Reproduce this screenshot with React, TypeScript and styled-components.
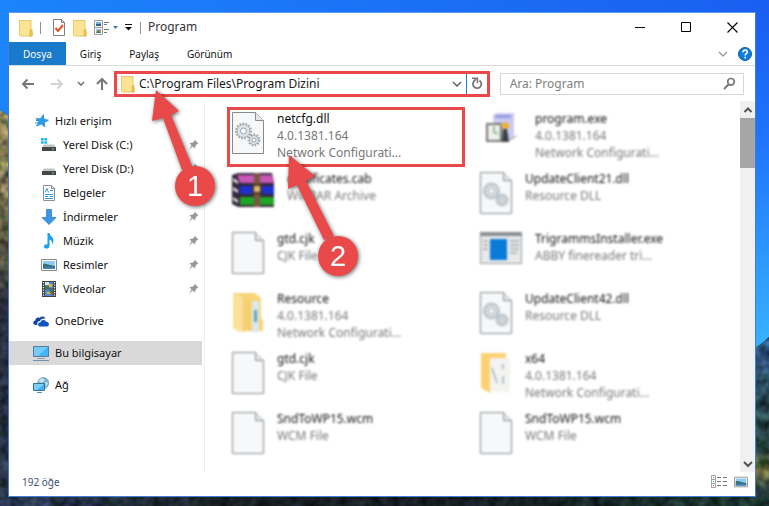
import React from "react";
import styled, { createGlobalStyle, css } from "styled-components";

const RED = "#e94a49";

const GlobalStyle = createGlobalStyle`
  * { box-sizing: border-box; }
  body { margin: 0; font-family: "Noto Sans", "Open Sans", sans-serif; font-size: 12px; color: #1a1a1a; }
  button, input { font: inherit; color: inherit; }
  ul { list-style: none; margin: 0; padding: 0; }
  svg { display: block; flex: none; }
`;

const Desktop = styled.div`
  position: relative;
  display: flex;
  min-height: 100vh;
  padding: 12px 13px 9px 8px;
  background: #1f7cf6;
`;

const WallpaperArt = styled.svg`
  position: absolute;
  inset: 0;
  width: 100%;
  height: 100%;
`;

const Window = styled.main`
  position: relative;
  flex: 1;
  min-width: 0;
  display: flex;
  flex-direction: column;
  background: #fff;
  border: 1px solid #3f7fd6;
  border-top-color: #5f9cf2;
`;

const TitleBar = styled.header`
  display: flex;
  align-items: center;
  height: 29px;
  padding-left: 10px;
`;

const QuickTools = styled.div`
  display: flex;
  align-items: center;
`;

const IconButton = styled.button<{ $w?: number; $h?: number }>`
  display: flex;
  align-items: center;
  justify-content: center;
  flex: none;
  width: ${(p) => p.$w ?? 20}px;
  height: ${(p) => p.$h ?? 20}px;
  padding: 0;
  border: 0;
  background: none;
`;

const Separator = styled.span<{ $left: number; $right: number }>`
  width: 1px;
  height: 12px;
  margin: 0 ${(p) => p.$right}px 0 ${(p) => p.$left}px;
  background: #8f8f8f;
`;

const Title = styled.h1`
  flex: 1;
  margin: 0;
  padding-bottom: 2px;
  font-size: 12px;
  font-weight: 400;
  color: #333;
`;

const Ribbon = styled.div`
  display: flex;
  align-items: stretch;
  height: 24px;
  border-bottom: 1px solid #d9dadc;
`;

const Tab = styled.button<{ $active?: boolean }>`
  padding: 0 14px;
  border: 0;
  font-size: 10px;
  background: ${(p) => (p.$active ? "#1979ca" : "none")};
  color: ${(p) => (p.$active ? "#fff" : "#111")};
`;

const RibbonEnd = styled.div`
  display: flex;
  align-items: center;
  gap: 5px;
  margin-left: auto;
  padding-right: 3px;
`;

const Toolbar = styled.div`
  display: flex;
  align-items: center;
  height: 35px;
  padding-right: 11px;
`;

const NavButtons = styled.div`
  display: flex;
  align-items: center;
  flex: none;
  width: 105px;
  padding-left: 10px;
`;

const AddressBar = styled.div`
  display: flex;
  align-items: center;
  flex: 365 1 0;
  min-width: 0;
  height: 26px;
  margin-right: 10px;
  padding-left: 4px;
  border: 3px solid ${RED};
`;

const TextField = styled.input`
  flex: 1;
  min-width: 0;
  padding: 0;
  border: 0;
  outline: 0;
  background: none;
  &::placeholder { color: #808080; opacity: 1; }
`;

const AddressField = styled(TextField)`
  margin-left: 4px;
`;

const RefreshButton = styled(IconButton)`
  border-left: 1px solid #1883e0;
`;

const SearchBar = styled.label`
  display: flex;
  align-items: center;
  flex: 226 1 0;
  min-width: 0;
  height: 22px;
  padding: 0 7px 0 9px;
  border: 1px solid #d6d6d6;
`;

const Body = styled.div`
  display: flex;
  flex: 1;
  min-height: 0;
`;

const Sidebar = styled.nav`
  display: flex;
  flex-direction: column;
  gap: 8px;
  flex: none;
  width: 196px;
  padding: 8px 2px 0 0;
  border-right: 1px solid #ededed;
`;

const Place = styled.a<{ $nested?: boolean; $selected?: boolean }>`
  display: flex;
  align-items: center;
  gap: 6px;
  height: 24px;
  padding: 0 3px 0 ${(p) => (p.$nested ? 32 : 24)}px;
  background: ${(p) => (p.$selected ? "#d9d9d9" : "none")};
  color: #111;
  font-size: 11px;
  text-decoration: none;
  white-space: nowrap;
`;

const PlaceName = styled.span`
  flex: 1;
  padding-bottom: 2px;
`;

const FileGrid = styled.ul`
  flex: 1;
  min-width: 0;
  display: grid;
  grid-template-columns: 1fr 1fr;
  grid-auto-rows: 60px;
  padding: 6px 17px 0 22px;
`;

const FileItem = styled.li<{ $sharp?: boolean }>`
  display: flex;
  gap: 13px;
  min-width: 0;
  margin-right: 10px;
  padding-left: 2px;
  border: 3px solid transparent;
  ${(p) =>
    p.$sharp
      ? css`border-color: ${RED};`
      : css`filter: blur(1px);`}
`;

const FileIcon = styled.span<{ $wide?: boolean }>`
  display: flex;
  justify-content: center;
  align-items: flex-start;
  flex: none;
  width: ${(p) => (p.$wide ? 42 : 32)}px;
  padding-top: 2px;
`;

const FileText = styled.div`
  min-width: 0;
  line-height: 17px;
  white-space: nowrap;
`;

const FileName = styled.div`
  color: #111;
`;

const FileInfo = styled.div`
  color: #777;
`;

const ScrollBar = styled.div`
  display: flex;
  flex-direction: column;
  flex: none;
  width: 15px;
  background: #f0f0f0;
`;

const ScrollThumb = styled.div`
  height: 50px;
  margin-bottom: auto;
  background: #a6a6a6;
`;

const StatusBar = styled.footer`
  display: flex;
  align-items: center;
  height: 24px;
  padding: 0 7px 4px 13px;
  color: #3c5075;
  font-size: 10px;
`;

const ViewButtons = styled.div`
  display: flex;
  gap: 6px;
  margin-left: auto;
`;

const Callout = styled.div<{ $x: number; $y: number }>`
  position: absolute;
  left: ${(p) => p.$x}px;
  top: ${(p) => p.$y}px;
  pointer-events: none;
  filter: drop-shadow(1px 1px 2px rgba(0, 0, 0, 0.6));
`;

const Badge = styled.span<{ $x: number; $y: number }>`
  position: absolute;
  left: ${(p) => p.$x}px;
  top: ${(p) => p.$y}px;
  display: flex;
  align-items: center;
  justify-content: center;
  width: 40px;
  height: 40px;
  border-radius: 50%;
  background: ${RED};
  color: #fff;
  font-family: "Liberation Sans", sans-serif;
  font-size: 29px;
`;

const Wallpaper = () => (
  <WallpaperArt viewBox="0 0 769 506" preserveAspectRatio="none" aria-hidden="true">
    <defs>
      <linearGradient id="skyTop" x1="0" x2="1">
        <stop offset="0" stopColor="#1b84fb" />
        <stop offset="1" stopColor="#1a5ff0" />
      </linearGradient>
      <linearGradient id="skyRight" x1="0" y1="0" x2="0" y2="1">
        <stop offset="0" stopColor="#1a5ff0" />
        <stop offset="0.35" stopColor="#1e72fb" />
        <stop offset="1" stopColor="#38b4ff" />
      </linearGradient>
      <linearGradient id="cliff" x1="0" y1="0" x2="0" y2="1">
        <stop offset="0" stopColor="#8f8457" />
        <stop offset="0.35" stopColor="#5c5a45" />
        <stop offset="0.5" stopColor="#252a38" />
        <stop offset="1" stopColor="#2c3a50" />
      </linearGradient>
      <linearGradient id="slope" x1="0" y1="0" x2="0" y2="1">
        <stop offset="0" stopColor="#2b4f80" />
        <stop offset="0.4" stopColor="#294a50" />
        <stop offset="0.68" stopColor="#2a4340" />
        <stop offset="0.78" stopColor="#6a6c38" />
        <stop offset="0.9" stopColor="#263c3c" />
        <stop offset="1" stopColor="#1e3432" />
      </linearGradient>
      <linearGradient id="ground" x1="0" x2="1">
        <stop offset="0" stopColor="#2c3a56" />
        <stop offset="0.3" stopColor="#182023" />
        <stop offset="0.6" stopColor="#141b20" />
        <stop offset="1" stopColor="#1c3530" />
      </linearGradient>
      <filter id="rough" x="0" y="0" width="100%" height="100%" colorInterpolationFilters="sRGB">
        <feTurbulence type="fractalNoise" baseFrequency="0.1" numOctaves="2" seed="4" />
        <feColorMatrix values="1 0 0 0 0  0.8 0.2 0 0 0  0.8 0 0.2 0 0  0 0 0 0 1" result="noise" />
        <feComposite in="noise" in2="SourceGraphic" operator="arithmetic" k1="2" k2="0" k3="0" k4="0" result="shaded" />
        <feComposite in="shaded" in2="SourceGraphic" operator="in" result="cut" />
        <feColorMatrix in="cut" values="1 0 0 0 0  0 1 0 0 0  0 0 1 0 0  0 0 0 1 0" />
      </filter>
    </defs>
    <rect width="769" height="506" fill="url(#skyTop)" />
    <rect x="740" y="12" width="29" height="340" fill="url(#skyRight)" />
    <g filter="url(#rough)">
      <path d="M0 110L9 116V506H0Z" fill="url(#cliff)" />
      <path d="M755 348L762 343L769 337V506H755Z" fill="url(#slope)" />
      <rect y="496" width="769" height="10" fill="url(#ground)" />
    </g>
  </WallpaperArt>
);

const Folder = () => (
  <svg width="14" height="18" viewBox="0 0 14 18">
    <path d="M.5 1.5h11.500v10.500l1 1V17H1.500L.5 16z" fill="#fde394" stroke="#e9c763" />
    <path d="M11 17v-5.500l2-1V17z" fill="#fbd25c" stroke="#dfb440" />
  </svg>
);

const CheckedPage = () => (
  <svg width="14" height="17" viewBox="0 0 14 17">
    <path d="M1.500 .5h8l3 3v13h-11z" fill="#fff" stroke="#808080" />
    <path d="M9.500 .5v3h3" fill="none" stroke="#808080" />
    <path d="M3.500 9l2.500 3L11 6" fill="none" stroke="#e8501e" strokeWidth="2" />
  </svg>
);

const ViewLayout = () => (
  <svg width="16" height="16" viewBox="0 0 16 16">
    <path d="M.5 .5h8v7h-8zM.5 7.500h8v7h-8z" fill="#fff" stroke="#999" />
    <path d="M2 2h5v2H2z" fill="#6db7ef" /><path d="M2 4h5v2H2z" fill="#3a5f86" />
    <path d="M2 9h5v4H2z" fill="#8cc3ea" /><path d="M2 13l2.500-3L7 13z" fill="#34803a" /><path d="M5 10h2v2H5z" fill="#dc783a" />
    <path d="M10 2.500h5M10 4.500h3M10 9.500h5M10 12.500h3" stroke="#777" />
  </svg>
);

const Caret = ({ color, barred }: { color: string; barred?: boolean }) => (
  <svg width="7" height="7" viewBox="0 0 7 7">
    {barred && <path d="M0 .5h7" stroke={color} />}
    <path d={barred ? "M0 3h7L3.500 6.500z" : "M1 2h5L3.500 5z"} fill={color} />
  </svg>
);

const Chevron = ({ color, up, width = 1.3 }: { color: string; up?: boolean; width?: number }) => (
  <svg width="10" height="8" viewBox="0 0 10 8">
    <path d={up ? "M1.500 6L5 2.500L8.500 6" : "M1 2L5 6L9 2"} fill="none" stroke={color} strokeWidth={width} />
  </svg>
);

const SmallChevron = () => (
  <svg width="8" height="6" viewBox="0 0 8 6">
    <path d="M1 1L4 4L7 1" fill="none" stroke="#777" strokeWidth="1.600" />
  </svg>
);

const Arrow = ({ kind }: { kind: "left" | "right" | "up" }) => (
  <svg width="14" height="14" viewBox="0 0 14 14">
    <path
      d={{
        left: "M13 7H2M6.500 2.500L2 7l4.500 4.500",
        right: "M1 7h11M7.500 2.500L12 7l-4.500 4.500",
        up: "M7 13V2M2 7l5-5l5 5",
      }[kind]}
      fill="none"
      stroke={kind === "right" ? "#d2d2d2" : "#777"}
      strokeWidth="2"
    />
  </svg>
);

const Refresh = () => (
  <svg width="12" height="13" viewBox="0 0 12 13">
    <path d="M8.500 3.500A4.200 4.200 0 1 1 3 4.200L5 2" fill="none" stroke="#777" strokeWidth="1.800" />
    <path d="M1 1.200h5.500v5" fill="none" stroke="#777" strokeWidth="1.600" />
  </svg>
);

const Magnifier = () => (
  <svg width="13" height="13" viewBox="0 0 13 13">
    <circle cx="8" cy="4.800" r="3.300" fill="none" stroke="#777" strokeWidth="1.700" />
    <path d="M5.500 7.500L1 12" stroke="#777" strokeWidth="2" />
  </svg>
);

const Help = () => (
  <svg width="14" height="14" viewBox="0 0 14 14">
    <circle cx="7" cy="7" r="6.500" fill="#0f7edb" stroke="#0b5ea9" />
    <path d="M5 5.300c0-3 4.300-2.700 4.300-.2C9.300 6.700 7.200 6.700 7.200 8.500M7.200 9.800v1.600" fill="none" stroke="#fff" strokeWidth="1.600" />
  </svg>
);

const Minimize = () => (
  <svg width="11" height="11"><path d="M0 5.500h10" stroke="#000" /></svg>
);
const Maximize = () => (
  <svg width="11" height="11"><path d="M.5 .5h9v9h-9z" fill="none" stroke="#000" /></svg>
);
const Close = () => (
  <svg width="11" height="11"><path d="M.5 .5l10 10M10.500 .5l-10 10" stroke="#000" strokeWidth="1.100" /></svg>
);

const Pin = () => (
  <svg width="11" height="12" viewBox="0 0 11 12">
    <path d="M6.500 .5L10.500 4.500L9 5L7.500 7L7 9.500L4.500 7.500L.8 11.200L3.500 6.500L1.500 4L4.500 3.700L6.500 2z" fill="#919ba4" />
  </svg>
);

const QuickStar = () => (
  <svg width="16" height="16" viewBox="0 0 16 16">
    <path d="M10.500 1.500L11 6l4.500 1.200L11.500 9.500l.3 4.500L8.300 11L4 13l1.500-4.300L3 5.500l4.300.3z" fill="#2f9be8" stroke="#1a7fd0" strokeWidth=".6" />
    <path d="M3 7.500h3M2 10h3.500M3 12.500h2" stroke="#2f9be8" />
  </svg>
);

const Drive = ({ system }: { system?: boolean }) => (
  <svg width="16" height="16" viewBox="0 0 16 16">
    {system && <path d="M0 1h2.700v2.500H0zM3.400 1h2.700v2.500H3.400zM0 4.200h2.700v2.500H0zM3.400 4.200h2.700v2.500H3.400z" fill="#1db5f5" />}
    <path d="M3 7.500h10L14.500 10h-13z" fill="#c4c4c4" />
    <path d="M1 10h14v4H1z" fill="#464646" />
    <path d="M11 11.500h2v1h-2z" fill="#3ee850" />
  </svg>
);

const DocumentPage = () => (
  <svg width="16" height="16" viewBox="0 0 16 16">
    <path d="M2.500 .5h8l3 3v12h-11z" fill="#fff" stroke="#8b8f94" />
    <path d="M10.500 .5v3h3" fill="none" stroke="#8b8f94" />
    <path d="M4 7.500l2-4 1.500 4M9 5.500h3M4 9.500h8M4 11.500h3M8.500 11.500H12M4 13.500h8" fill="none" stroke="#3396dd" />
  </svg>
);

const DownArrow = () => (
  <svg width="16" height="16" viewBox="0 0 16 16">
    <path d="M5.500 .5h5v8H15L8 15.500L1 8.500h4.500z" fill="#3b97e6" stroke="#2a7fcb" strokeWidth=".8" />
  </svg>
);

const Note = () => (
  <svg width="16" height="16" viewBox="0 0 16 16">
    <path d="M6.500 0h2c.3 3 4.200 4 4 8-.1 1.800-1 3-1.500 3.500C11.800 8.500 10 7 8.500 6.500V13c0 3-5.500 3.600-5.500.8 0-2 2-2.800 3.500-2.300z" fill="#17a1ee" />
  </svg>
);

const Picture = ({ small }: { small?: boolean }) => (
  <svg width={small ? 14 : 16} height={small ? 12 : 16} viewBox={small ? "0 2 16 12" : "0 0 16 16"}>
    <path d="M.5 2.500h15v11H.5z" fill="#fff" stroke="#8c8c8c" />
    <path d="M2 4h12v8H2z" fill="#8ecbf3" />
    <path d="M2 7c3-1 5 1 12 2v3H2z" fill="#386f78" />
    <path d="M2 10.500c4-1 8 0 12-.5v2H2z" fill="#3e83bd" />
  </svg>
);

const Film = () => (
  <svg width="16" height="16" viewBox="0 0 16 16">
    <path d="M1 0h14v16H1z" fill="#404040" />
    <path d="M2.500 1v14M13.500 1v14" stroke="#eee" strokeWidth="1.300" strokeDasharray="1.300 1.200" />
    <path d="M4 1h8v6.500H4zM4 8.500h8V15H4z" fill="#4b8fd6" />
    <path d="M4 1h4v3H4z" fill="#d9e7f2" /><path d="M8 3h3v3H8zM6 11h3v2H6z" fill="#e7b535" />
    <path d="M4 5h4v2.500H4zM9 9h3v3H9z" fill="#3f7c3b" /><path d="M10 12h2v2h-2z" fill="#d0402c" />
  </svg>
);

const Cloud = () => (
  <svg width="16" height="16" viewBox="0 0 16 16">
    <path d="M4.500 12H2.500C-.5 11.500-.3 7.800 2.300 7.500 2.500 5 5 4 6.500 5c1.500-2.500 5.500-2 6 .8-3-.8-5 .5-5.400 2.200C4.500 8 3.700 10.200 4.500 12z" fill="#0d45a6" />
    <path d="M6.800 13.500C4.300 13 4.600 9.500 7.500 9.300 8 6.500 12 6 13 8.800c3.600-.1 3.800 4.200 1 4.700z" fill="#0f55bd" />
  </svg>
);

const Monitor = () => (
  <svg width="16" height="16" viewBox="0 0 16 16">
    <path d="M.5 1.500h15v10H.5z" fill="#45b4f6" stroke="#557d98" />
    <path d="M1 2h14L5 11H1z" fill="#74cbfb" />
    <path d="M4 13.500h8" stroke="#87a3b8" /><path d="M0 15.500h16" stroke="#7292ad" />
  </svg>
);

const Network = () => (
  <svg width="16" height="16" viewBox="0 0 16 16">
    <circle cx="10.200" cy="6" r="5.500" fill="#7fb4d1" stroke="#6292ae" strokeWidth=".7" />
    <path d="M9 1c-4 2-4 4 0 5l3-3zM12 5l3 1-2 4z" fill="#c7e2ee" />
    <path d="M.5 6.500h11v7H.5z" fill="#45b4f6" stroke="#36718f" />
    <path d="M1 7h10l-7 6H1z" fill="#7ccffb" />
    <path d="M4 15.500h5" stroke="#5f86a3" />
  </svg>
);

const DetailsView = () => (
  <svg width="17" height="14" viewBox="0 0 17 14">
    <path d="M.5 .5h4v12h-4zM.5 4.500h4M.5 8.500h4" fill="none" stroke="#a5a5a5" />
    <path d="M6 2.500h4M12 2.500h4M6 6.500h4M12 6.500h4M6 10.500h4M12 10.500h4" stroke="#777" />
    <path d="M2 2h1v1H2z" fill="#398" /><path d="M2 6h1v1H2z" fill="#38c" /><path d="M2 10h1v1H2z" fill="#d33" />
  </svg>
);

const Gear = ({ cx, cy, r }: { cx: number; cy: number; r: number }) => (
  <g fill="#dde4e9" stroke="#98a3ab">
    <circle cx={cx} cy={cy} r={r + 1} fill="none" strokeWidth="2" strokeDasharray="1.600 1.500" />
    <circle cx={cx} cy={cy} r={r} strokeWidth=".8" />
    <circle cx={cx} cy={cy} r={r * 0.45} fill="#fff" strokeWidth="1" />
  </g>
);

const Page = ({ gears }: { gears?: boolean }) => (
  <svg width="32" height="42" viewBox="0 0 32 42">
    <path d="M.5 .5h23l8 8v33H.5z" fill="#f7f8f9" stroke="#848b8e" />
    <path d="M23.500 .5v8h8" fill="#e6e9eb" stroke="#848b8e" />
    {gears && <Gear cx={11.5} cy={19} r={6.5} />}
    {gears && <Gear cx={22} cy={28} r={4.5} />}
  </svg>
);

const Archive = () => (
  <svg width="42" height="36" viewBox="0 0 42 36">
    <path d="M0 3l6-2h34l2 9v25H6l-6-3z" fill="#33283a" />
    <path d="M5 3h35l2 8H8z" fill="#c757b8" />
    <path d="M8 14h34v8H8z" fill="#1c30d0" />
    <path d="M8 25h34v8H8z" fill="#1fa526" />
    <path d="M1 6l5 3v3l-5-3zM1 15l5 3v3l-5-3zM1 25l5 3v3l-5-3z" fill="#e8dfe4" />
    <path d="M22 1h6v34h-6z" fill="#7a5540" /><path d="M21 13h8v8h-8z" fill="#d8bb73" stroke="#4b3527" strokeWidth="2" />
  </svg>
);

const FullFolder = () => (
  <svg width="32" height="42" viewBox="0 0 32 42">
    <path d="M1 1h22l6 5v20l2 2v11H8L1 36z" fill="#f8d477" />
    <path d="M1 1l11 5v34H8l-7-4z" fill="#fce09a" />
    <path d="M20 9h7v31h-7z" fill="#dce8ee" /><path d="M22 18h3v12h-3z" fill="#5da0bd" />
    <path d="M12 7v33M17 9v30" stroke="#eabf55" />
  </svg>
);

const OpenFolder = () => (
  <svg width="32" height="42" viewBox="0 0 32 42">
    <path d="M1 1h25v8H10v32L1 36z" fill="#fcd271" />
    <path d="M10 6h20v34H10z" fill="#f3f3f1" />
    <path d="M12 16l5 15M23 12v5M23 24v8" stroke="#a3b5bb" strokeWidth="1.500" />
  </svg>
);

const Installer = () => (
  <svg width="31" height="34" viewBox="0 0 31 34">
    <path d="M7 3l4-2h17v25l-5 3H9z" fill="#c9caf2" /><path d="M9 3h16v3H9z" fill="#9a9de0" />
    <path d="M1 12h14v17H1z" fill="#eef0ea" stroke="#777" strokeWidth="2" />
    <path d="M14 13l6-3 4 4-4 4z" fill="#f0b02f" /><path d="M17 17h4l2 13h-7z" fill="#36413f" />
    <path d="M8 14v7h4" fill="none" stroke="#478b45" /><path d="M23 28l8-4" stroke="#999" />
  </svg>
);

const AppWindow = () => (
  <svg width="42" height="32" viewBox="0 0 42 32">
    <path d="M.5 .5h41v31H.5z" fill="#e7e9ea" stroke="#999" /><path d="M0 0h42v4H0z" fill="#888e91" />
    <path d="M10 7h17v21H10z" fill="#087bd8" />
    <path d="M3 9h5M3 13h5M3 17h5M30 9h9M30 13h9M30 17h9M30 21h7" stroke="#b5b9bc" strokeWidth="2" />
  </svg>
);

type PlaceEntry = { name: string; icon: React.ReactNode; nested?: boolean; pinned?: boolean; selected?: boolean };

const placeGroups: PlaceEntry[][] = [
  [
    { name: "Hızlı erişim", icon: <QuickStar /> },
    { name: "Yerel Disk (C:)", icon: <Drive system />, nested: true, pinned: true },
    { name: "Yerel Disk (D:)", icon: <Drive />, nested: true, pinned: true },
    { name: "Belgeler", icon: <DocumentPage />, nested: true, pinned: true },
    { name: "İndirmeler", icon: <DownArrow />, nested: true, pinned: true },
    { name: "Müzik", icon: <Note />, nested: true, pinned: true },
    { name: "Resimler", icon: <Picture />, nested: true, pinned: true },
    { name: "Videolar", icon: <Film />, nested: true, pinned: true },
  ],
  [{ name: "OneDrive", icon: <Cloud /> }],
  [{ name: "Bu bilgisayar", icon: <Monitor />, selected: true }],
  [{ name: "Ağ", icon: <Network /> }],
];

type FileEntry = { name: string; info: string[]; icon: React.ReactNode; wide?: boolean; sharp?: boolean };

const versionInfo = ["4.0.1381.164", "Network Configurati..."];

const files: FileEntry[] = [
  { name: "netcfg.dll", info: versionInfo, icon: <Page gears />, sharp: true },
  { name: "program.exe", info: versionInfo, icon: <Installer />, wide: true },
  { name: "certificates.cab", info: ["WinRAR Archive"], icon: <Archive />, wide: true },
  { name: "UpdateClient21.dll", info: ["Resource DLL"], icon: <Page gears /> },
  { name: "gtd.cjk", info: ["CJK File"], icon: <Page /> },
  { name: "TrigrammsInstaller.exe", info: ["ABBY finereader tri..."], icon: <AppWindow />, wide: true },
  { name: "Resource", info: versionInfo, icon: <FullFolder /> },
  { name: "UpdateClient42.dll", info: ["Resource DLL"], icon: <Page gears /> },
  { name: "gtd.cjk", info: ["CJK File"], icon: <Page /> },
  { name: "x64", info: versionInfo, icon: <OpenFolder /> },
  { name: "SndToWP15.wcm", info: ["WCM File"], icon: <Page /> },
  { name: "SndToWP15.wcm", info: ["WCM File"], icon: <Page /> },
];

export default function App() {
  return (
    <>
      <GlobalStyle />
      <Desktop>
        <Wallpaper />
        <Window>
          <TitleBar>
            <QuickTools>
              <Folder />
              <Separator $left={7} $right={11} />
              <IconButton $w={14} aria-label="Özellikler"><CheckedPage /></IconButton>
              <IconButton $w={28} aria-label="Yeni klasör"><Folder /></IconButton>
              <IconButton $w={16} aria-label="Düzen"><ViewLayout /></IconButton>
              <IconButton $w={10} aria-label="Düzen seçenekleri"><Caret color="#3c78b4" /></IconButton>
              <IconButton $w={17} aria-label="Hızlı araç çubuğu"><Caret color="#111" barred /></IconButton>
              <Separator $left={3} $right={7} />
            </QuickTools>
            <Title>Program</Title>
            <IconButton $w={46} $h={29} aria-label="Küçült"><Minimize /></IconButton>
            <IconButton $w={46} $h={29} aria-label="Ekranı kapla"><Maximize /></IconButton>
            <IconButton $w={46} $h={29} aria-label="Kapat"><Close /></IconButton>
          </TitleBar>
          <Ribbon>
            <Tab $active>Dosya</Tab>
            <Tab>Giriş</Tab>
            <Tab>Paylaş</Tab>
            <Tab>Görünüm</Tab>
            <RibbonEnd>
              <IconButton aria-label="Şeridi genişlet"><Chevron color="#999" /></IconButton>
              <IconButton $w={14} aria-label="Yardım"><Help /></IconButton>
            </RibbonEnd>
          </Ribbon>
          <Toolbar>
            <NavButtons>
              <IconButton $w={18} aria-label="Geri"><Arrow kind="left" /></IconButton>
              <IconButton $w={40} aria-label="İleri"><Arrow kind="right" /></IconButton>
              <IconButton $w={8} aria-label="Son konumlar"><SmallChevron /></IconButton>
              <IconButton $w={34} aria-label="Yukarı"><Arrow kind="up" /></IconButton>
            </NavButtons>
            <AddressBar>
              <Folder />
              <AddressField aria-label="Adres" defaultValue="C:\Program Files\Program Dizini" />
              <IconButton $w={18} aria-label="Önceki konumlar"><Chevron color="#555" /></IconButton>
              <RefreshButton $w={21} aria-label="Yenile"><Refresh /></RefreshButton>
            </AddressBar>
            <SearchBar>
              <TextField aria-label="Ara" placeholder="Ara: Program" />
              <Magnifier />
            </SearchBar>
          </Toolbar>
          <Body>
            <Sidebar>
              {placeGroups.map((group, i) => (
                <ul key={i}>
                  {group.map((p) => (
                    <li key={p.name}>
                      <Place href="#" $nested={p.nested} $selected={p.selected}>
                        {p.icon}
                        <PlaceName>{p.name}</PlaceName>
                        {p.pinned && <Pin />}
                      </Place>
                    </li>
                  ))}
                </ul>
              ))}
            </Sidebar>
            <FileGrid>
              {files.map((f, i) => (
                <FileItem key={i} $sharp={f.sharp}>
                  <FileIcon $wide={f.wide}>{f.icon}</FileIcon>
                  <FileText>
                    <FileName>{f.name}</FileName>
                    {f.info.map((line) => <FileInfo key={line}>{line}</FileInfo>)}
                  </FileText>
                </FileItem>
              ))}
            </FileGrid>
            <ScrollBar>
              <IconButton $w={15} $h={17} aria-label="Yukarı kaydır"><Chevron color="#555" up width={2} /></IconButton>
              <ScrollThumb />
              <IconButton $w={15} $h={17} aria-label="Aşağı kaydır"><Chevron color="#555" width={2} /></IconButton>
            </ScrollBar>
          </Body>
          <StatusBar>
            192 öğe
            <ViewButtons>
              <IconButton $w={17} $h={14} aria-label="Ayrıntılar"><DetailsView /></IconButton>
              <IconButton $w={14} $h={14} aria-label="Büyük simgeler"><Picture small /></IconButton>
            </ViewButtons>
          </StatusBar>
          <Callout $x={141} $y={77}>
            <svg width="66" height="118"><path d="M6 0L29 21L21 25L42 76L32 80L13 28L2 31Z" fill={RED} /></svg>
            <Badge $x={25} $y={76}>1</Badge>
          </Callout>
          <Callout $x={277} $y={142}>
            <svg width="74" height="122"><path d="M3 0L29 21L20 26L48 81L38 85L11 30L2 34Z" fill={RED} /></svg>
            <Badge $x={32} $y={81}>2</Badge>
          </Callout>
        </Window>
      </Desktop>
    </>
  );
}
